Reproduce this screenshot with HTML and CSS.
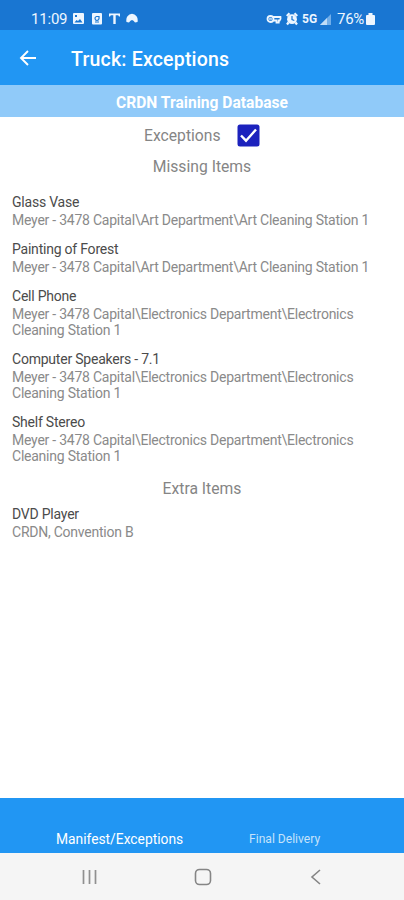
FILE: index.html
```html
<!DOCTYPE html>
<html lang="en">
<head>
<meta charset="utf-8">
<title>Truck: Exceptions</title>
<link rel="stylesheet" href="styles.css">
</head>
<body>
<div class="screen">
  <div class="status">
    <span class="clock">11:09</span>
    <svg class="notices" width="66" height="14" viewBox="0 0 66 14">
      <path fill="#eef6ff" fill-rule="evenodd" d="M2 1h9q1 0 1 1v9q0 1-1 1h-9q-1 0-1-1v-9q0-1 1-1zM2.500 10.500h8l-2.500-3.500-2 2-1.500-1zM3 3v2h2v-2z"/>
      <rect x="20" y="1" width="10" height="11.500" rx="1" fill="#eef6ff"/>
      <path d="M26.500 4.500h-2a2 2 0 1 0 2.500 2v-2.500M23 10h4" fill="none" stroke="#1976d2" stroke-width="1.200"/>
      <path d="M37 1.500h11v3h-1l-.8-1.200h-2.500v8.700h-2.400v-8.700h-2.500l-.8 1.200h-1z" fill="#eef6ff"/>
      <path d="M54.500 10a5.700 6.500 0 1 1 11 0l-2.500.5q-3-5-6 0z" fill="#eef6ff"/>
    </svg>
    <svg class="signals" width="34" height="14" viewBox="0 0 34 14">
      <g fill="none" stroke="#eef6ff" stroke-width="1.800"><circle cx="4.500" cy="7" r="3"/><circle cx="4.500" cy="7" r=".4"/><path d="M7 5h7.500q.5 2-.8 3.500h-1v2h-2.200v-2h-3"/></g>
      <circle cx="26" cy="7.200" r="4.900" fill="#eef6ff"/>
      <path d="M20.800 4l2.700-2.700M31.200 4l-2.700-2.700M22.500 10.500l-1.500 2M29.500 10.500l1.500 2" stroke="#eef6ff" stroke-width="2.200"/>
      <path d="M26 4v3.500l2.300 1" fill="none" stroke="#1976d2" stroke-width="1.200"/>
    </svg>
    <b class="network">5G</b>
    <svg class="bars" width="12" height="13" viewBox="0 0 12 13"><path d="M0 12L11 1v11z" fill="#72aee9"/><path d="M0 12L7 5v7z" fill="#c0dcf7"/></svg>
    <span class="percent">76%</span>
    <svg class="battery" width="9" height="13" viewBox="0 0 9 13"><path d="M2.500 0h4v2h1.500q1 0 1 1v8q0 1-1 1h-7q-1 0-1-1v-8q0-1 1-1h1.500z" fill="#eef6ff"/></svg>
  </div>
  <header class="appbar">
    <svg class="back" width="18" height="18" viewBox="0 0 18 18"><path d="M17 9H2.500M9 2L2 9 9 16" fill="none" stroke="#fff" stroke-width="1.900"/></svg>
    <h1>Truck: Exceptions</h1>
  </header>
  <div class="banner"><span>CRDN Training Database</span></div>
  <main>
    <label class="filter"><span class="heading exceptions">Exceptions</span>
      <svg width="24" height="24" viewBox="0 0 24 24"><rect x="1.500" y="1.500" width="22" height="22" rx="2.500" fill="#1c22bd"/><path d="M5 12.500l5 5.200L20 6.500" fill="none" stroke="#fff" stroke-width="2.400"/></svg>
    </label>
    <h2 class="heading missing">Missing Items</h2>
    <ul class="items">
      <li><h3>Glass Vase</h3><p>Meyer - 3478 Capital\Art Department\Art Cleaning Station 1</p></li>
      <li><h3>Painting of Forest</h3><p>Meyer - 3478 Capital\Art Department\Art Cleaning Station 1</p></li>
      <li><h3>Cell Phone</h3><p>Meyer - 3478 Capital\Electronics Department\Electronics<br>Cleaning Station 1</p></li>
      <li><h3>Computer Speakers - 7.1</h3><p>Meyer - 3478 Capital\Electronics Department\Electronics<br>Cleaning Station 1</p></li>
      <li><h3>Shelf Stereo</h3><p>Meyer - 3478 Capital\Electronics Department\Electronics<br>Cleaning Station 1</p></li>
    </ul>
    <h2 class="heading extra">Extra Items</h2>
    <ul class="items">
      <li><h3>DVD Player</h3><p>CRDN, Convention B</p></li>
    </ul>
  </main>
  <nav class="tabs"><span class="tab active">Manifest/Exceptions</span><span class="tab">Final Delivery</span></nav>
  <footer class="system">
    <svg width="18" height="18" viewBox="0 0 18 18"><path d="M2.500 2v14M8.500 2v14M14.500 2v14" stroke="#909090" stroke-width="1.700"/></svg>
    <svg width="18" height="18" viewBox="0 0 18 18"><rect x="1.500" y="1.500" width="15" height="15" rx="4" fill="none" stroke="#858585" stroke-width="1.600"/></svg>
    <svg width="18" height="18" viewBox="0 0 18 18"><path d="M13 2L5 9l8 7" fill="none" stroke="#858585" stroke-width="1.600"/></svg>
  </footer>
</div>
</body>
</html>
```
FILE: styles.css
```css
* { box-sizing: border-box; margin: 0; padding: 0; }
body { font-family: Roboto, "Liberation Sans", sans-serif; background: #fff; }
.screen { width: 404px; height: 900px; display: flex; flex-direction: column; overflow: hidden; white-space: nowrap; }
svg { display: block; flex: none; }
.status { height: 30px; flex: none; background: #1976d2; color: #eef6ff; display: flex; align-items: center; padding: 8px 29px 0 31px; }
.clock { width: 41px; font-size: 15px; letter-spacing: -0.2px; }
.signals { margin-left: auto; }
.network { width: 17px; margin-left: 2px; font-size: 12px; }
.bars { margin-left: 1px; }
.percent { width: 29px; margin-left: 5px; font-size: 15px; letter-spacing: -0.3px; }
.appbar { height: 55px; flex: none; background: #2196f3; color: #fff; display: flex; align-items: center; padding: 2px 0 0 19px; }
.appbar h1 { margin: 2px 0 0 34px; font-size: 19.5px; font-weight: 500; letter-spacing: 0.2px; }
.back { margin-top: -2px; }
.banner { height: 32px; flex: none; background: #90caf9; color: #fff; display: flex; align-items: center; justify-content: center; font-size: 15.6px; font-weight: 700; padding-top: 3px; }
main { flex: 1; }
.filter { height: 36px; display: flex; align-items: center; padding-left: 144px; }
.exceptions { width: 92px; }
.heading { font-size: 15.7px; font-weight: 400; color: #858585; }
.missing, .extra { text-align: center; line-height: 20px; }
.missing { margin: 4px 0 16px; }
.items { list-style: none; padding: 0 12px; }
.items li { padding-bottom: 12px; }
.items h3 { font-size: 14px; font-weight: 400; line-height: 19px; letter-spacing: -0.22px; color: #4b4b4b; }
.items p { font-size: 14px; line-height: 16px; letter-spacing: -0.235px; color: #8a8a8a; }
.extra { margin: 3px 0 6px; }
.tabs { height: 55px; flex: none; background: #2196f3; color: #c5e3fb; display: flex; padding: 31px 0 0 56px; line-height: 20px; }
.tab { width: 155px; padding-left: 38px; font-size: 12.1px; }
.tab.active { padding-left: 0; color: #fff; font-size: 13.8px; }
.system { height: 47px; flex: none; background: #f5f5f5; display: flex; justify-content: space-between; padding: 15px 79px 0 81px; }
```
